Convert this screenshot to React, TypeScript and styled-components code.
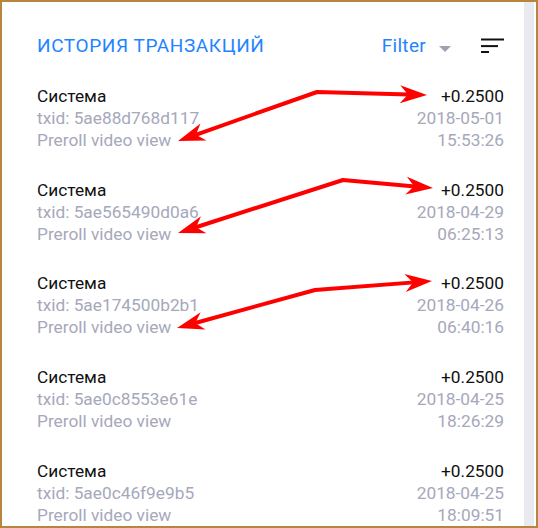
import React from 'react'
import styled, { createGlobalStyle } from 'styled-components'

interface ITransaction {
  txid: string
  date: string
  time: string
}

const transactions: ITransaction[] = [
  { txid: '5ae88d768d117', date: '2018-05-01', time: '15:53:26' },
  { txid: '5ae565490d0a6', date: '2018-04-29', time: '06:25:13' },
  { txid: '5ae174500b2b1', date: '2018-04-26', time: '06:40:16' },
  { txid: '5ae0c8553e61e', date: '2018-04-25', time: '18:26:29' },
  { txid: '5ae0c46f9e9b5', date: '2018-04-25', time: '18:09:51' },
]

// annotation arrows: vertex, right tip, left tip
const arrows: [number, number][][] = [
  [
    [317, 92],
    [427, 95],
    [178, 141],
  ],
  [
    [343, 180],
    [433, 188],
    [178, 233],
  ],
  [
    [315, 290],
    [432, 281],
    [177, 328],
  ],
]

function headPoints(from: [number, number], tip: [number, number]): string {
  const dx = tip[0] - from[0]
  const dy = tip[1] - from[1]
  const len = Math.hypot(dx, dy)
  const ux = dx / len
  const uy = dy / len
  const nx = -uy
  const ny = ux
  const L = 27
  const W = 9
  const back = 19
  const b1 = [tip[0] - ux * L + nx * W, tip[1] - uy * L + ny * W]
  const b2 = [tip[0] - ux * L - nx * W, tip[1] - uy * L - ny * W]
  const notch = [tip[0] - ux * back, tip[1] - uy * back]
  return [tip, b1, notch, b2].map((p) => `${p[0]},${p[1]}`).join(' ')
}

function Arrows(): JSX.Element {
  return (
    <Style.Overlay width="538" height="528" viewBox="0 0 538 528">
      {arrows.map(([v, r, l], i) => {
        const shorten = (tip: [number, number]): string => {
          const dx = tip[0] - v[0]
          const dy = tip[1] - v[1]
          const len = Math.hypot(dx, dy)
          return `${tip[0] - (dx / len) * 18},${tip[1] - (dy / len) * 18}`
        }
        return (
          <g key={i} fill="#ff0000" stroke="#ff0000">
            <polyline
              points={`${shorten(l)} ${v[0]},${v[1]} ${shorten(r)}`}
              fill="none"
              strokeWidth="4"
              strokeLinejoin="round"
            />
            <polygon points={headPoints(v, r)} stroke="none" />
            <polygon points={headPoints(v, l)} stroke="none" />
          </g>
        )
      })}
    </Style.Overlay>
  )
}

function SortIcon(): JSX.Element {
  return (
    <svg width="23" height="24" viewBox="0 0 23 24">
      <rect x="0" y="4.5" width="23" height="2" fill="#111" />
      <rect x="0" y="11.1" width="17" height="2" fill="#111" />
      <rect x="0" y="17" width="8" height="2" fill="#111" />
    </svg>
  )
}

export default function App(): JSX.Element {
  return (
    <>
      <GlobalStyle />
      <Style.Frame>
        <Style.Content>
          <Style.Header>
            <Style.Title>ИСТОРИЯ ТРАНЗАКЦИЙ</Style.Title>
            <Style.Filter>
              Filter
              <Style.Caret />
            </Style.Filter>
            <SortIcon />
          </Style.Header>
          <Style.List>
            {transactions.map((t) => (
              <Style.Row key={t.txid}>
                <Style.Column>
                  <Style.Main>Система</Style.Main>
                  <Style.Muted>txid: {t.txid}</Style.Muted>
                  <Style.Muted>Preroll video view</Style.Muted>
                </Style.Column>
                <Style.Column align="right">
                  <Style.Main>+0.2500</Style.Main>
                  <Style.Muted>{t.date}</Style.Muted>
                  <Style.Muted>{t.time}</Style.Muted>
                </Style.Column>
              </Style.Row>
            ))}
          </Style.List>
        </Style.Content>
        <Style.Scrollbar />
        <Arrows />
      </Style.Frame>
    </>
  )
}

const GlobalStyle = createGlobalStyle`
  body {
    margin: 0;
    font-family: Roboto, "Liberation Sans", sans-serif;
    background: #fff;
  }
`

const Style = {
  Frame: styled.div`
    position: relative;
    display: flex;
    width: 538px;
    height: 528px;
    box-sizing: border-box;
    border: 2px solid #b8853f;
    background: #fff;
    overflow: hidden;
  `,
  Content: styled.div`
    flex: 1;
    padding: 31.7px 20px 0 35px;
  `,
  Header: styled.div`
    display: flex;
    align-items: center;
    height: 24px;
  `,
  Title: styled.div`
    flex: 1;
    font-size: 19px;
    letter-spacing: 0.6px;
    color: #1f84ff;
    white-space: nowrap;
  `,
  Filter: styled.div`
    display: flex;
    align-items: center;
    gap: 13px;
    margin-right: 30px;
    font-size: 19px;
    letter-spacing: 0.3px;
    color: #1f84ff;
  `,
  Caret: styled.span`
    width: 0;
    height: 0;
    margin-top: 6px;
    border-left: 6px solid transparent;
    border-right: 6px solid transparent;
    border-top: 6px solid #9ea1b0;
  `,
  List: styled.div`
    display: flex;
    flex-direction: column;
    gap: 27.75px;
    padding-top: 27.1px;
  `,
  Row: styled.div`
    display: flex;
    justify-content: space-between;
  `,
  Column: styled.div<{ align?: 'left' | 'right' }>`
    display: flex;
    flex-direction: column;
    text-align: ${({ align }) => align ?? 'left'};
    font-size: 17.3px;
    line-height: 22px;
  `,
  Main: styled.div`
    color: #111;
  `,
  Muted: styled.div`
    color: #a6a8bb;
  `,
  Scrollbar: styled.div`
    width: 10px;
    margin-right: 2px;
    background: #e9eaf0;
  `,
  Overlay: styled.svg`
    position: absolute;
    left: -2px;
    top: -2px;
    pointer-events: none;
  `,
}
